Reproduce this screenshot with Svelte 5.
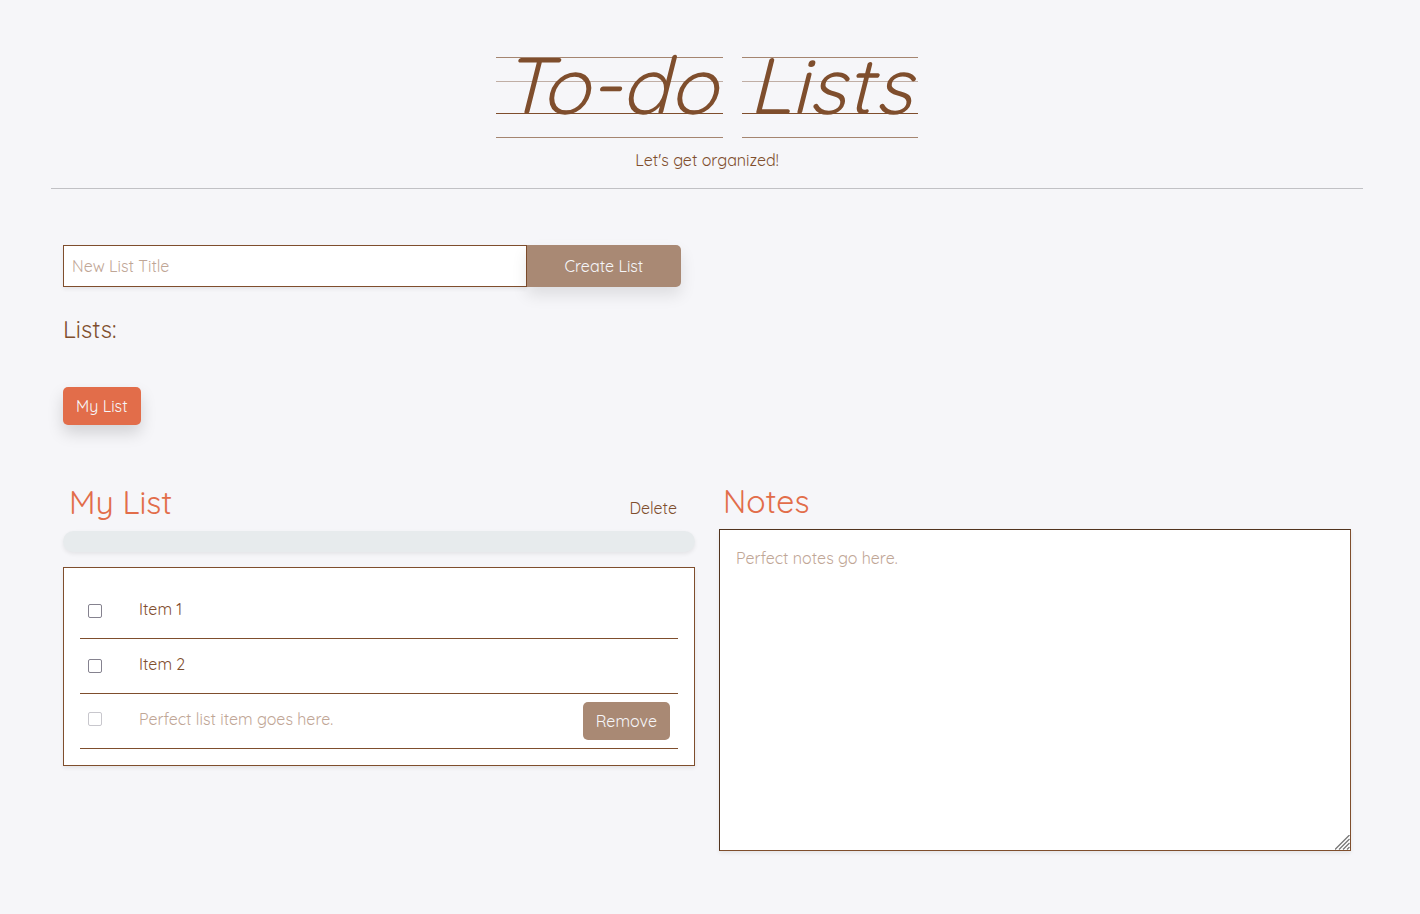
<script>
  let title = $state('');
  let notes = $state('');
  let draft = $state('');
  let items = $state([
    { id: 1, name: 'Item 1', done: false },
    { id: 2, name: 'Item 2', done: false }
  ]);
</script>

<main class="page">
  <header class="masthead">
    <h1><span class="word">To-do</span> <span class="word">Lists</span></h1>
    <p>Let's get organized!</p>
  </header>

  <section class="intro">
    <form class="create" onsubmit={(e) => e.preventDefault()}>
      <input type="text" aria-label="New List Title" placeholder="New List Title" bind:value={title} />
      <button class="btn" type="submit">Create List</button>
    </form>
    <h2>Lists:</h2>
    <button class="btn active" type="button">My List</button>
  </section>

  <div class="columns">
    <section>
      <div class="heading">
        <h3>My List</h3>
        <button class="link" type="button">Delete</button>
      </div>
      <div class="progress" role="progressbar" aria-label="Completed" aria-valuenow="0" aria-valuemin="0" aria-valuemax="100"></div>
      <ul class="items">
        {#each items as item (item.id)}
          <li>
            <input type="checkbox" id={`item-${item.id}`} bind:checked={item.done} />
            <label for={`item-${item.id}`}>{item.name}</label>
          </li>
        {/each}
        <li class="new-item">
          <input type="checkbox" aria-label="New item done" disabled />
          <input class="draft" type="text" aria-label="New item" placeholder="Perfect list item goes here." bind:value={draft} />
          <button class="btn flat" type="button">Remove</button>
        </li>
      </ul>
    </section>

    <section>
      <div class="heading notes-heading">
        <h3><label for="notes">Notes</label></h3>
      </div>
      <textarea id="notes" placeholder="Perfect notes go here." bind:value={notes}></textarea>
    </section>
  </div>
</main>

<style>
  :global(body) {
    margin: 0;
    background: #f6f6f9;
  }

  .page,
  .page * {
    box-sizing: border-box;
  }

  .page {
    --brown: #7f4e2d;
    --tan: #a98974;
    --orange: #e26d4a;
    --font: Quicksand, 'Open Sans', sans-serif;
    padding: 48px 57px 60px 51px;
    color: var(--brown);
    font: 400 16px/24px var(--font);
  }

  h1,
  h2,
  h3,
  p {
    margin: 0;
    font-weight: 400;
  }

  input,
  button,
  textarea {
    font: inherit;
    color: inherit;
  }

  ::placeholder {
    color: #bfa696;
    opacity: 1;
  }

  .masthead {
    display: flex;
    flex-direction: column;
    align-items: center;
    border-bottom: 1px solid #c1c1c5;
    padding-bottom: 16px;
  }

  h1 {
    display: flex;
    gap: 19px;
    padding-top: 9px;
    font: italic 400 80px/54px var(--font);
  }

  /* Handwriting-paper rules: cap line, midline, baseline, descender line. */
  .word {
    height: 81px;
    padding: 0 6px;
    background:
      linear-gradient(#a58570, #a58570) 0 0 / 100% 1px no-repeat,
      linear-gradient(#c0aea5, #c0aea5) 0 24px / 100% 1px no-repeat,
      linear-gradient(var(--brown), var(--brown)) 0 56px / 100% 1px no-repeat,
      linear-gradient(#a58570, #a58570) 0 80px / 100% 1px no-repeat;
  }

  .masthead p {
    padding-top: 10px;
  }

  .intro {
    padding: 56px 12px 0;
  }

  .create {
    display: flex;
    width: 48%;
    height: 42px;
  }

  .create input {
    flex: 1;
    min-width: 0;
    padding: 0 8px;
    border: 1px solid var(--brown);
    border-radius: 0;
    background: #fff;
    box-shadow: 0 2px 4px rgba(0, 0, 0, 0.075);
    outline: 0;
  }

  .btn {
    height: 38px;
    padding: 0 13px;
    border: 0;
    border-radius: 5px;
    background: var(--tan);
    color: #f6f6f9;
    box-shadow: 0 8px 16px rgba(0, 0, 0, 0.15);
  }

  .create .btn {
    flex: none;
    width: 25%;
    height: 42px;
    border-radius: 0 5px 5px 0;
    box-shadow: 0 8px 16px rgba(0, 0, 0, 0.1);
  }

  .btn.active {
    background: var(--orange);
  }

  .btn.flat {
    box-shadow: none;
  }

  h2 {
    padding: 26px 0 42px;
    font-size: 24px;
    line-height: 32px;
  }

  .columns {
    display: grid;
    grid-template-columns: 1fr 1fr;
    gap: 24px;
    padding: 58px 12px 0;
  }

  .heading {
    display: flex;
    align-items: flex-end;
    justify-content: space-between;
    height: 48px;
    padding: 0 18px 11px 6px;
  }

  .notes-heading {
    height: 46px;
    padding: 0 4px 10px;
  }

  h3 {
    color: var(--orange);
    font-size: 32px;
    line-height: 36px;
  }

  .link {
    padding: 0;
    border: 0;
    background: none;
  }

  .progress {
    height: 21px;
    border-radius: 11px;
    background: #e7ebed;
    box-shadow: 0 2px 4px rgba(0, 0, 0, 0.075);
  }

  .items {
    margin: 15px 0 0;
    padding: 16px;
    border: 1px solid var(--brown);
    background: #fff;
    box-shadow: 0 2px 4px rgba(0, 0, 0, 0.075);
    list-style: none;
  }

  li {
    display: flex;
    align-items: center;
    height: 55px;
    padding: 0 8px;
    border-bottom: 1px solid var(--brown);
  }

  .new-item {
    align-items: flex-start;
    padding-top: 8px;
  }

  .new-item [type='checkbox'] {
    margin-top: 10px;
  }

  li label,
  .draft {
    flex: 1;
    min-width: 0;
    height: 28px;
    padding: 0;
    border: 0;
    outline: 0;
    background: none;
    line-height: 24px;
  }

  .draft {
    height: 34px;
  }

  [type='checkbox'] {
    appearance: none;
    flex: none;
    width: 14px;
    height: 14px;
    margin: 0 37px 0 0;
    border: 1px solid #85828f;
    border-radius: 2px;
    background: #fff;
  }

  [type='checkbox']:checked {
    background: var(--brown);
  }

  [type='checkbox']:disabled {
    border-color: #c8c7cd;
  }

  textarea {
    display: block;
    width: 100%;
    height: 322px;
    padding: 16px;
    border: 1px solid;
    border-color: #52341f var(--brown) var(--brown) #52341f;
    background: #fff;
    box-shadow: 0 2px 4px rgba(0, 0, 0, 0.075);
    outline: 0;
    resize: vertical;
  }

  textarea::-webkit-resizer {
    background: url("data:image/svg+xml,%3Csvg xmlns='http://www.w3.org/2000/svg' width='15' height='15'%3E%3Cpath d='M0 14.500L14.500 0M4 14.500L14.500 4M8 14.500L14.500 8M12 14.500L14.500 12' stroke='%23777' stroke-width='1.300'/%3E%3C/svg%3E") no-repeat right bottom;
  }
</style>
